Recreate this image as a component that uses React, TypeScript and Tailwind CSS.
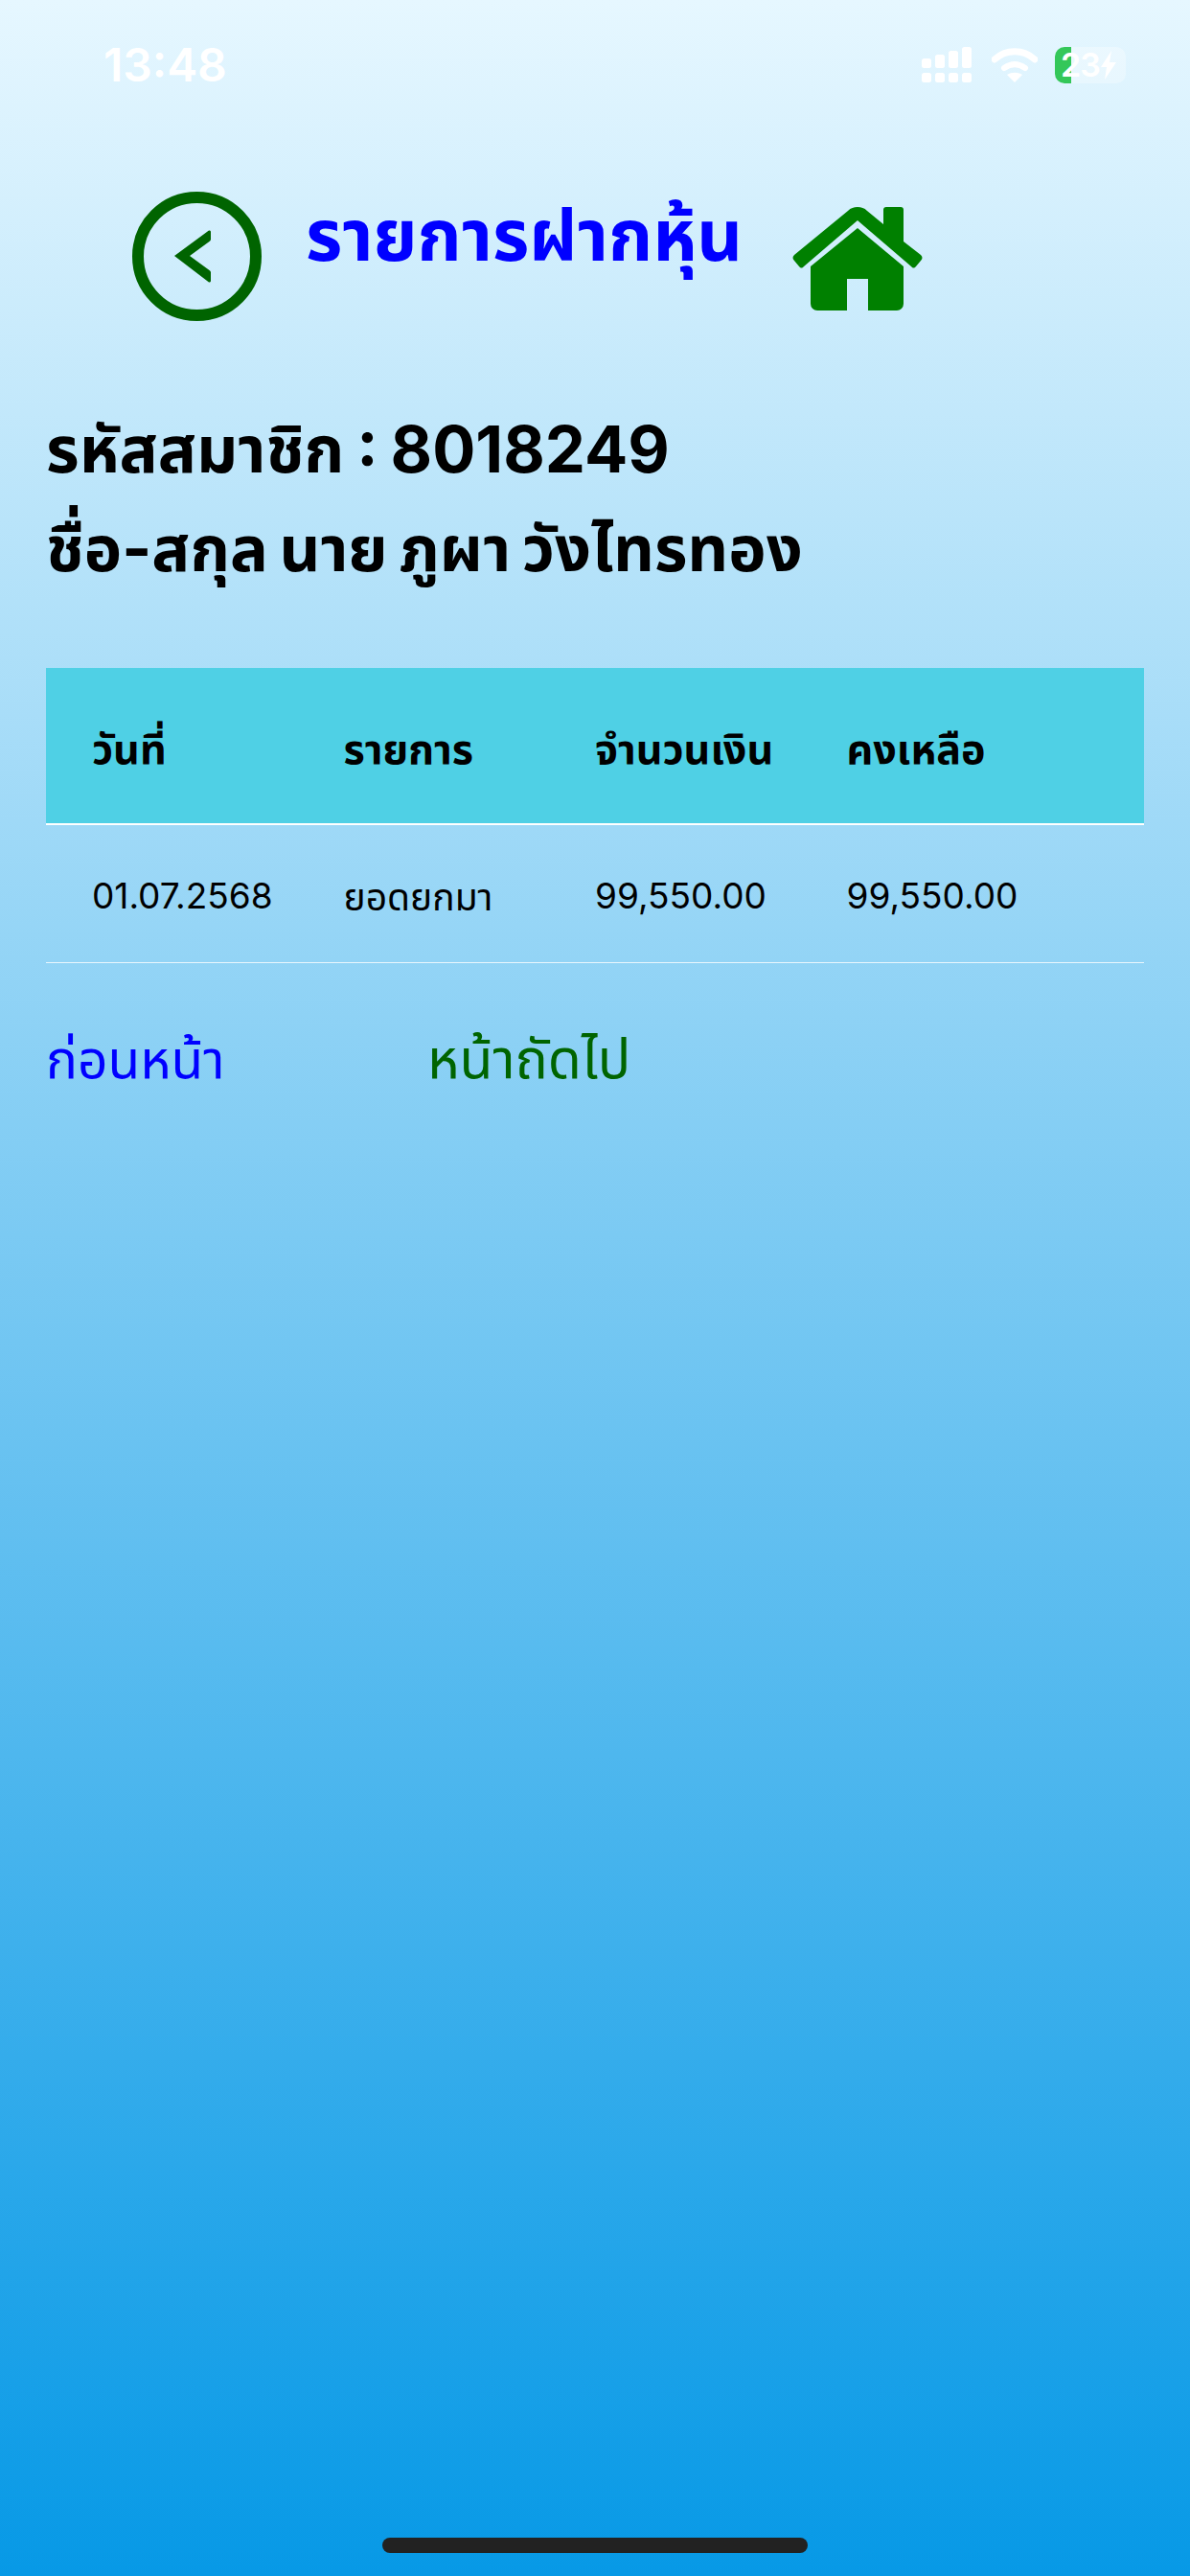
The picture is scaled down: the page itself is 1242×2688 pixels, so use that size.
const font = "font-['Inter','Noto_Sans','Noto_Sans_Thai','DejaVu_Sans',sans-serif]";

function BackIcon() {
  return (
    <svg width="135" height="135" viewBox="0 0 135 135" fill="none">
      <circle cx="67.5" cy="67.5" r="61.5" stroke="#006400" strokeWidth="12" />
      <path
        d="M44 67 80 40.5a1.5 1.5 0 0 1 2 1.5V49a3 3 0 0 1-1.5 3L60 67l20.5 15a3 3 0 0 1 1.5 3V93a1.5 1.5 0 0 1-2 1.5z"
        fill="#006400"
      />
    </svg>
  );
}

function HomeIcon() {
  return (
    <svg width="136" height="108" viewBox="0 0 136 108" fill="#008000">
      <path d="M68 0c-4 0-7 1-10 4L2 50c-2 2-2 4 0 6l5 6c2 2 3 2 5 0L68 14l56 48c2 2 3 2 5 0l5-6c2-2 2-4 0-6L116 36V3a3 3 0 0 0-3-3H98a3 3 0 0 0-3 3V18L78 4c-3-3-6-4-10-4z" />
      <path d="M68 22 116 62v39a7 7 0 0 1-7 7H79V75H57v33H26a7 7 0 0 1-7-7V62z" />
    </svg>
  );
}

function StatusIcons() {
  return (
    <div className="flex items-center">
      <svg width="52" height="38" viewBox="0 0 52 38" fill="#ffffff" className="mr-[21px]">
        <rect x="0" y="12" width="10" height="10" rx="2.5" />
        <rect x="14" y="8" width="10" height="14" rx="2.5" />
        <rect x="28" y="4" width="10" height="18" rx="2.5" />
        <rect x="42" y="0" width="10" height="22" rx="2.5" />
        <rect x="0" y="27" width="10" height="10" rx="2.5" />
        <rect x="14" y="27" width="10" height="10" rx="2.5" />
        <rect x="28" y="27" width="10" height="10" rx="2.5" />
        <rect x="42" y="27" width="10" height="10" rx="2.5" />
      </svg>
      <svg width="48" height="36" viewBox="0 0 48 36" fill="none" stroke="#ffffff" className="mr-[18px]">
        <path d="M3 12C15 1 33 1 45 12" strokeWidth="7" strokeLinecap="round" />
        <path d="M13 21c7-5 15-5 22 0" strokeWidth="6" strokeLinecap="round" />
        <path d="M24 36 16 28c5-3 11-3 16 0z" fill="#ffffff" stroke="none" />
      </svg>
      <div className="relative flex h-[38px] w-[74px] items-center rounded-[10px] bg-white/30">
        <div className="absolute inset-y-0 left-0 w-[17px] rounded-l-[10px] bg-[#34c759]" />
        <span className="relative pl-[6px] text-[34px] leading-[38px] font-semibold tracking-[-1px] text-white">23</span>
        <svg width="16" height="30" viewBox="0 0 16 30" fill="#ffffff" className="relative ml-[1px]">
          <path d="M11 0 0 17h6L4 30 16 12H9z" />
        </svg>
      </div>
    </div>
  );
}

export default function App() {
  const columns = ["วันที่", "รายการ", "จำนวนเงิน", "คงเหลือ"];

  return (
    <div className={`${font} relative flex h-[2688px] w-[1242px] flex-col overflow-hidden bg-linear-to-b/srgb from-[#e6f7ff] to-[#0799e6]`}>
      {/* Status bar */}
      <div className="mt-[43px] flex h-[50px] items-center justify-between pr-[67px] pl-[108px]">
        <span className="text-[48px] leading-none font-semibold text-white">13:48</span>
        <StatusIcons />
      </div>

      {/* Title row */}
      <div className="mt-[107px] flex items-start pl-[138px]">
        <BackIcon />
        <h1 className="ml-[46px] w-[508px] text-[74px] leading-[90px] font-bold text-[#0000ff]">รายการฝากหุ้น</h1>
        <div className="mt-[16px]">
          <HomeIcon />
        </div>
      </div>

      {/* Member */}
      <div className="mt-[81px] px-[48px] text-[67px] leading-[106px] font-bold text-black">
        <p className="[word-spacing:-3px]">รหัสสมาชิก : 8018249</p>
        <p className="mt-[-3px] text-[66.5px] [word-spacing:-4px]">ชื่อ-สกุล นาย ภูผา วังไทรทอง</p>
      </div>

      {/* Table */}
      <div className="mx-[48px] mt-[72px]">
        <div className="grid h-[164px] grid-cols-[262.5px_262.5px_262.5px_1fr] items-center border-b-2 border-white bg-[#4fd0e5] pt-[6px] pl-[48px]">
          {columns.map((c) => (
            <div key={c} className="text-[43px] leading-[56px] font-bold text-black">
              {c}
            </div>
          ))}
        </div>
        <div className="grid h-[144px] grid-cols-[262.5px_262.5px_262.5px_1fr] items-center border-b border-white/80 pt-[4px] pl-[48px] text-[37px] text-black">
          <div>01.07.2568</div>
          <div className="pt-[4px] text-[39px]">ยอดยกมา</div>
          <div>99,550.00</div>
          <div>99,550.00</div>
        </div>
      </div>

      {/* Paging */}
      <div className="mt-[65px] flex px-[48px] text-[55px] leading-[70px]">
        <span className="w-[398px] text-[#0000ff]">ก่อนหน้า</span>
        <span className="text-[57px] text-[#006400]">หน้าถัดไป</span>
      </div>

      {/* Home indicator */}
      <div className="absolute bottom-[24px] left-[399px] h-[16px] w-[444px] rounded-full bg-[#222222]" />
    </div>
  );
}
